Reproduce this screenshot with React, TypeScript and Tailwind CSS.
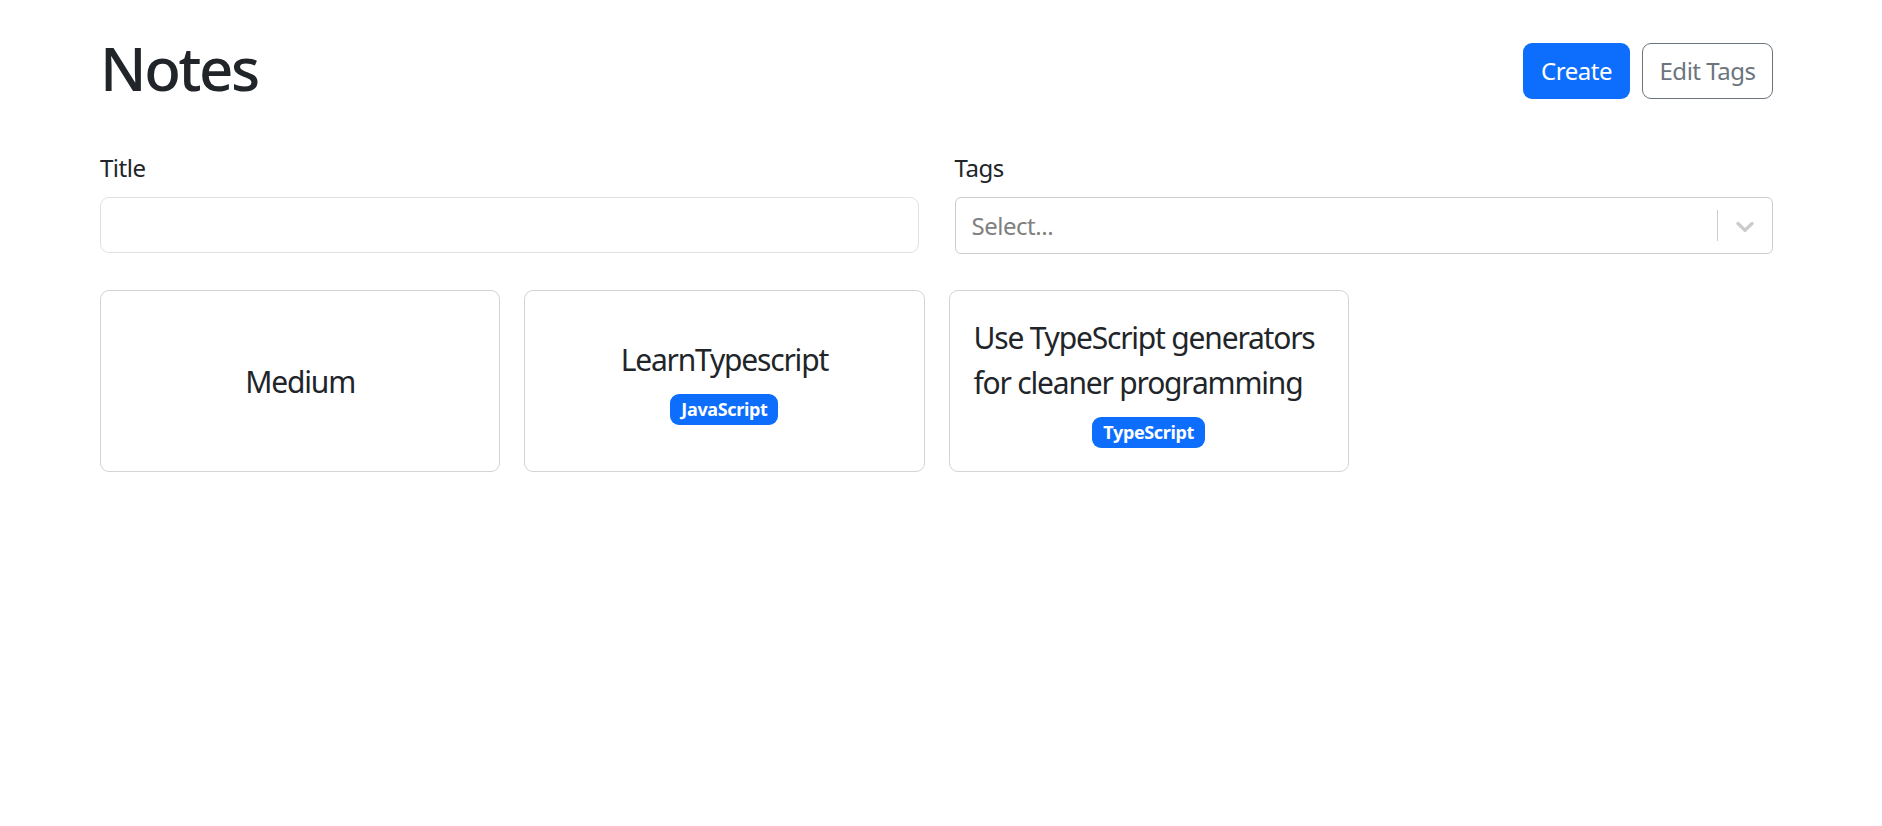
import React from "react";

type Note = { id: string; title: string; tags: string[] };

const notes: Note[] = [
  { id: "1", title: "Medium", tags: [] },
  { id: "2", title: "LearnTypescript", tags: ["JavaScript"] },
  { id: "3", title: "Use TypeScript generators for cleaner programming", tags: ["TypeScript"] },
];

function ChevronDown() {
  return (
    <svg viewBox="0 0 20 20" className="w-[30px] h-[30px]" fill="#cccccc" aria-hidden="true">
      <path d="M4.516 7.548c0.436-0.446 1.043-0.481 1.576 0l3.908 3.747 3.908-3.747c0.533-0.481 1.141-0.446 1.574 0 0.436 0.445 0.408 1.197 0 1.615-0.406 0.418-4.695 4.502-4.695 4.502-0.217 0.223-0.502 0.335-0.787 0.335s-0.57-0.112-0.789-0.335c0 0-4.287-4.084-4.695-4.502s-0.436-1.17 0-1.615z" />
    </svg>
  );
}

function NoteCard({ note }: { note: Note }) {
  return (
    <div className="h-[182px] border border-[#d3d4d5] rounded-[9px] bg-white p-[24px] flex flex-col items-center justify-center gap-[12px]">
      <span className="text-[30px] leading-[45px] tracking-[-0.04em] text-[#212529] text-left">{note.title}</span>
      {note.tags.length > 0 && (
        <div className="flex flex-wrap justify-center gap-[6px]">
          {note.tags.map((tag) => (
            <span
              key={tag}
              className="bg-[#0d6efd] text-white text-[18px] font-bold leading-none tracking-[-0.02em] px-[11px] pt-[6px] pb-[7px] rounded-[9px]"
            >
              {tag}
            </span>
          ))}
        </div>
      )}
    </div>
  );
}

export default function App() {
  return (
    <div
      className="min-h-screen bg-white text-[#212529]"
      style={{ fontFamily: '"Noto Sans", "Open Sans", sans-serif' }}
    >
      <div className="ml-[100px] w-[1673px] pt-[29px]">
        {/* Header */}
        <div className="flex items-center justify-between mb-[36px]">
          <h1 className="text-[60px] font-medium leading-[72px] tracking-[-0.04em] mt-[3px] mb-[9px]">Notes</h1>
          <div className="flex gap-[12px]">
            <button className="w-[107px] h-[56px] rounded-[9px] bg-[#0d6efd] text-white text-[24px] leading-[36px] tracking-[-0.02em]">
              Create
            </button>
            <button className="w-[131px] h-[56px] rounded-[9px] border border-[#6c757d] bg-white text-[#6c757d] text-[24px] leading-[36px] tracking-[-0.02em]">
              Edit Tags
            </button>
          </div>
        </div>

        {/* Filters */}
        <form className="grid grid-cols-2 gap-x-[36px] mb-[36px]">
          <div className="flex flex-col">
            <label className="text-[24px] leading-[36px] mt-[1px] mb-[11px] tracking-[-0.02em]">Title</label>
            <input
              type="text"
              className="h-[56px] border border-[#dee2e6] rounded-[9px] px-[18px] text-[24px] outline-none"
            />
          </div>
          <div className="flex flex-col">
            <label className="text-[24px] leading-[36px] mt-[1px] mb-[11px] tracking-[-0.02em]">Tags</label>
            <div className="h-[57px] border border-[#cccccc] rounded-[6px] flex items-center">
              <div className="flex-1 pl-[16px] pt-[1px] text-[24px] text-[#808080] tracking-[-0.02em]">Select...</div>
              <div className="flex items-center self-stretch">
                <span className="w-px bg-[#cccccc] self-stretch my-[12px]" />
                <span className="p-[12px] flex items-center">
                  <ChevronDown />
                </span>
              </div>
            </div>
          </div>
        </form>

        {/* Notes */}
        <div className="grid grid-cols-4 gap-[24px]">
          {notes.map((n) => (
            <NoteCard key={n.id} note={n} />
          ))}
        </div>
      </div>
    </div>
  );
}
